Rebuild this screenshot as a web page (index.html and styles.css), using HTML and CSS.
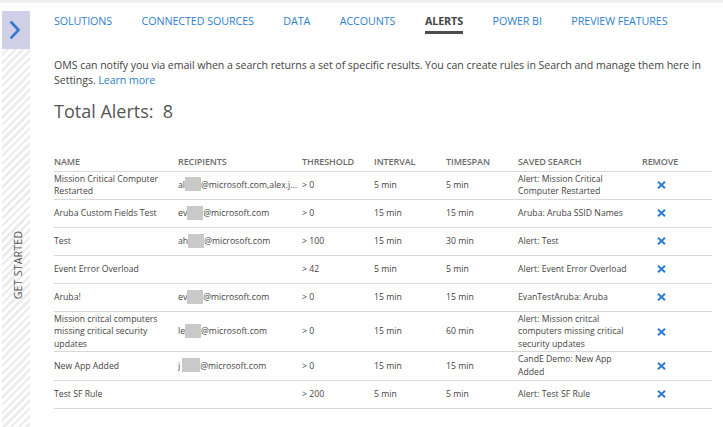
FILE: index.html
```html
<!DOCTYPE html>
<html>
<head>
<meta charset="utf-8">
<link rel="stylesheet" href="styles.css">
</head>
<body>
<div class="topbar"></div>
<div class="layout">
  <aside class="side">
    <div class="toggle">
      <svg width="28" height="38" viewBox="0 0 28 38"><path d="M9.5 11.5 L16.5 19 L9.5 26.5" fill="none" stroke="#3478cc" stroke-width="2.6" stroke-linecap="square"/></svg>
    </div>
    <div class="striped"><span class="get">GET STARTED</span></div>
  </aside>
  <main class="main">
    <nav class="tabs">
      <a class="tab">SOLUTIONS</a>
      <a class="tab">CONNECTED SOURCES</a>
      <a class="tab">DATA</a>
      <a class="tab">ACCOUNTS</a>
      <a class="tab active">ALERTS</a>
      <a class="tab">POWER BI</a>
      <a class="tab">PREVIEW FEATURES</a>
    </nav>
    <p class="intro"><span>OMS can notify you via email when a search returns a set of specific results. You can create rules in Search and manage them here in</span> <span>Settings.</span> <a class="link">Learn more</a></p>
    <h1 class="total">Total Alerts:&nbsp; 8</h1>
    <table class="alerts">
      <colgroup>
        <col class="c-name"><col class="c-rec"><col class="c-thr"><col class="c-int"><col class="c-ts"><col class="c-ss"><col class="c-rm">
      </colgroup>
      <thead>
        <tr><th>NAME</th><th>RECIPIENTS</th><th>THRESHOLD</th><th>INTERVAL</th><th>TIMESPAN</th><th>SAVED SEARCH</th><th>REMOVE</th></tr>
      </thead>
      <tbody>
        <tr><td>Mission Critical Computer Restarted</td><td class="rec">al<span class="redact"></span>@microsoft.com,alex.j...</td><td>&gt; 0</td><td>5 min</td><td>5 min</td><td>Alert: Mission Critical Computer Restarted</td><td><span class="x"><svg width="9" height="8" viewBox="0 0 9 8"><path d="M1 0.8 L8 7.2 M8 0.8 L1 7.2" stroke="#2c7bd0" stroke-width="2"/></svg></span></td></tr>
        <tr><td>Aruba Custom Fields Test</td><td class="rec">ev<span class="redact"></span>@microsoft.com</td><td>&gt; 0</td><td>15 min</td><td>15 min</td><td>Aruba: Aruba SSID Names</td><td><span class="x"><svg width="9" height="8" viewBox="0 0 9 8"><path d="M1 0.8 L8 7.2 M8 0.8 L1 7.2" stroke="#2c7bd0" stroke-width="2"/></svg></span></td></tr>
        <tr><td>Test</td><td class="rec">ah<span class="redact"></span>@microsoft.com</td><td>&gt; 100</td><td>15 min</td><td>30 min</td><td>Alert: Test</td><td><span class="x"><svg width="9" height="8" viewBox="0 0 9 8"><path d="M1 0.8 L8 7.2 M8 0.8 L1 7.2" stroke="#2c7bd0" stroke-width="2"/></svg></span></td></tr>
        <tr><td>Event Error Overload</td><td class="rec"></td><td>&gt; 42</td><td>5 min</td><td>5 min</td><td>Alert: Event Error Overload</td><td><span class="x"><svg width="9" height="8" viewBox="0 0 9 8"><path d="M1 0.8 L8 7.2 M8 0.8 L1 7.2" stroke="#2c7bd0" stroke-width="2"/></svg></span></td></tr>
        <tr><td>Aruba!</td><td class="rec">ev<span class="redact"></span>@microsoft.com</td><td>&gt; 0</td><td>15 min</td><td>15 min</td><td>EvanTestAruba: Aruba</td><td><span class="x"><svg width="9" height="8" viewBox="0 0 9 8"><path d="M1 0.8 L8 7.2 M8 0.8 L1 7.2" stroke="#2c7bd0" stroke-width="2"/></svg></span></td></tr>
        <tr><td>Mission critcal computers missing critical security updates</td><td class="rec">le<span class="redact"></span>@microsoft.com</td><td>&gt; 0</td><td>15 min</td><td>60 min</td><td>Alert: Mission critcal computers missing critical security updates</td><td><span class="x"><svg width="9" height="8" viewBox="0 0 9 8"><path d="M1 0.8 L8 7.2 M8 0.8 L1 7.2" stroke="#2c7bd0" stroke-width="2"/></svg></span></td></tr>
        <tr><td>New App Added</td><td class="rec">j<span class="redact wide"></span>@microsoft.com</td><td>&gt; 0</td><td>15 min</td><td>15 min</td><td>CandE Demo: New App Added</td><td><span class="x"><svg width="9" height="8" viewBox="0 0 9 8"><path d="M1 0.8 L8 7.2 M8 0.8 L1 7.2" stroke="#2c7bd0" stroke-width="2"/></svg></span></td></tr>
        <tr><td>Test SF Rule</td><td class="rec"></td><td>&gt; 200</td><td>5 min</td><td>5 min</td><td>Alert: Test SF Rule</td><td><span class="x"><svg width="9" height="8" viewBox="0 0 9 8"><path d="M1 0.8 L8 7.2 M8 0.8 L1 7.2" stroke="#2c7bd0" stroke-width="2"/></svg></span></td></tr>
      </tbody>
    </table>
  </main>
</div>
</body>
</html>
```

FILE: styles.css
```css
* { box-sizing: border-box; }
html, body { margin: 0; padding: 0; background: #fff; }
body {
  font-family: "Open Sans", "Noto Sans", sans-serif;
  color: #444;
  width: 723px;
  height: 427px;
  overflow: hidden;
}
.topbar { height: 3px; background: #efefef; }
.layout { display: flex; height: 424px; }
.side {
  width: 28px;
  margin-left: 2px;
  margin-top: 8px;
  display: flex;
  flex-direction: column;
  flex: none;
}
.toggle {
  height: 38px;
  background: #cfcfe8;
  display: flex;
}
.striped {
  flex: 1;
  background: repeating-linear-gradient(135deg, #ffffff 0px, #ffffff 3px, #ececec 3px, #ececec 5.5px);
  position: relative;
}
.get {
  position: absolute;
  left: 50%;
  top: 216px;
  transform: translate(-50%, -50%) rotate(-90deg);
  font-size: 10.6px;
  color: #555;
  letter-spacing: 0.2px;
  white-space: nowrap;
  margin-left: 2px;
}
.main { flex: 1; padding-left: 24px; padding-right: 7px; }
.tabs {
  display: flex;
  gap: 29.5px;
  height: 31px;
  padding-top: 11px;
}
.tab {
  font-size: 10.75px;
  color: #2f80d1;
  line-height: 15px;
  height: 20px;
  letter-spacing: -0.1px;
}
.tab.active {
  color: #444;
  font-weight: 700;
  border-bottom: 3px solid #4a4d52;
}
.intro {
  margin: 24px 0 0;
  font-size: 10.6px;
  line-height: 15px;
  color: #444;
  letter-spacing: -0.05px;
}
.link { color: #2a7fc2; }
.total {
  margin: 10px 0 0;
  font-size: 18px;
  font-weight: 400;
  color: #555;
  line-height: 26px;
}
.alerts {
  margin-top: 32px;
  border-collapse: collapse;
  table-layout: fixed;
  width: 658px;
  font-size: 8.7px;
  line-height: 12.6px;
}
.c-name, .c-rec, .c-ss { width: 124px; }
.c-thr, .c-int, .c-ts { width: 72px; }
.c-rm { width: 70px; }
.alerts th {
  text-align: left;
  font-size: 9px;
  font-weight: 600;
  color: #6b6b6b;
  padding: 0 0 1px;
  height: 15px;
  border-bottom: 1px solid #d9d9d9;
  vertical-align: middle;
  letter-spacing: -0.1px;
}
.alerts td {
  height: 28px;
  padding: 1px 6px 1px 0;
  vertical-align: middle;
  border-bottom: 1px solid #d9d9d9;
  color: #444;
}
.alerts td.rec { white-space: nowrap; overflow: hidden; padding-right: 0; }
.redact {
  display: inline-block;
  width: 16px;
  height: 14px;
  background: #c9c9c9;
  vertical-align: middle;
  margin-top: -2px;
}
.redact.wide { width: 18px; margin-left: 2px; }
.x {
  display: flex;
  width: 38px;
  justify-content: center;
}
.x svg { display: block; }
```
